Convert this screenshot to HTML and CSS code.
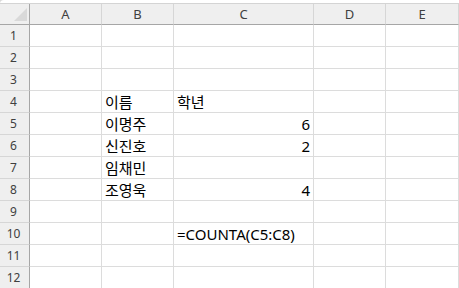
FILE: index.html
```html
<!DOCTYPE html>
<html lang="ko">
<head>
    <meta charset="UTF-8">
    <meta name="viewport" content="width=device-width, initial-scale=1.0">
    <title>시트</title>
    <link rel="stylesheet" href="styles.css">
</head>
<body>
    <div class="topbar"></div>
    <div class="sheet">
        <!-- 머리글 -->
        <div class="corner">
            <svg width="13" height="13" viewBox="0 0 13 13"><polygon points="13,0 13,13 0,13" fill="#d9d9d9"/></svg>
        </div>
        <div class="colhead">A</div>
        <div class="colhead">B</div>
        <div class="colhead">C</div>
        <div class="colhead">D</div>
        <div class="colhead last">E</div>

        <div class="rowhead">1</div>
        <div class="cell"></div><div class="cell"></div><div class="cell"></div><div class="cell"></div><div class="cell"></div>

        <div class="rowhead">2</div>
        <div class="cell"></div><div class="cell"></div><div class="cell"></div><div class="cell"></div><div class="cell"></div>

        <div class="rowhead">3</div>
        <div class="cell"></div><div class="cell"></div><div class="cell"></div><div class="cell"></div><div class="cell"></div>

        <div class="rowhead">4</div>
        <div class="cell"></div><div class="cell">이름</div><div class="cell">학년</div><div class="cell"></div><div class="cell"></div>

        <div class="rowhead">5</div>
        <div class="cell"></div><div class="cell">이명주</div><div class="cell num">6</div><div class="cell"></div><div class="cell"></div>

        <div class="rowhead">6</div>
        <div class="cell"></div><div class="cell">신진호</div><div class="cell num">2</div><div class="cell"></div><div class="cell"></div>

        <div class="rowhead">7</div>
        <div class="cell"></div><div class="cell">임채민</div><div class="cell num"></div><div class="cell"></div><div class="cell"></div>

        <div class="rowhead">8</div>
        <div class="cell"></div><div class="cell">조영욱</div><div class="cell num">4</div><div class="cell"></div><div class="cell"></div>

        <div class="rowhead">9</div>
        <div class="cell"></div><div class="cell"></div><div class="cell"></div><div class="cell"></div><div class="cell"></div>

        <div class="rowhead">10</div>
        <div class="cell"></div><div class="cell"></div><div class="cell formula">=COUNTA(C5:C8)</div><div class="cell"></div><div class="cell"></div>

        <div class="rowhead">11</div>
        <div class="cell"></div><div class="cell"></div><div class="cell"></div><div class="cell"></div><div class="cell"></div>

        <div class="rowhead">12</div>
        <div class="cell"></div><div class="cell"></div><div class="cell"></div><div class="cell"></div><div class="cell"></div>
    </div>
</body>
</html>
```

FILE: styles.css
```css
body {
    margin: 0;
    background-color: #d9d9d9;
    font-family: "Noto Sans", "Noto Sans CJK KR", sans-serif;
    overflow: hidden;
}

.topbar {
    height: 3px;
    background: white;
    border-top-left-radius: 4px;
    border-bottom: 1px solid #d4d4d4;
}

.sheet {
    display: grid;
    grid-template-columns: 30px 72px 72px 140px 72px 73px;
    grid-template-rows: 21px;
    grid-auto-rows: 22px;
    background: white;
}

.corner,
.colhead,
.rowhead,
.cell {
    box-sizing: border-box;
}

.corner {
    background-color: #efefef;
    border-right: 1px solid #a6a6a6;
    border-bottom: 1px solid #a6a6a6;
    display: flex;
    align-items: flex-end;
    justify-content: flex-end;
    padding: 0 2px 3px 0;
}

.corner svg {
    display: block;
}

.colhead {
    background-color: #efefef;
    border-right: 1px solid #d6d6d6;
    border-bottom: 1px solid #a6a6a6;
    color: #404040;
    font-size: 13px;
    display: flex;
    align-items: center;
    justify-content: center;
    padding-bottom: 1px;
}

.rowhead {
    background-color: #efefef;
    border-right: 1px solid #a6a6a6;
    border-bottom: 1px solid #d6d6d6;
    color: #404040;
    font-size: 12px;
    display: flex;
    align-items: center;
    justify-content: center;
    padding-right: 2px;
}

.cell {
    border-right: 1px solid #dcdcdc;
    border-bottom: 1px solid #dcdcdc;
    font-size: 15px;
    line-height: 18px;
    color: black;
    display: flex;
    align-items: flex-end;
    padding: 0 2px 1px 3px;
    white-space: nowrap;
}

.num {
    justify-content: flex-end;
    padding-right: 3px;
}

.formula {
    padding-left: 3px;
}
```
